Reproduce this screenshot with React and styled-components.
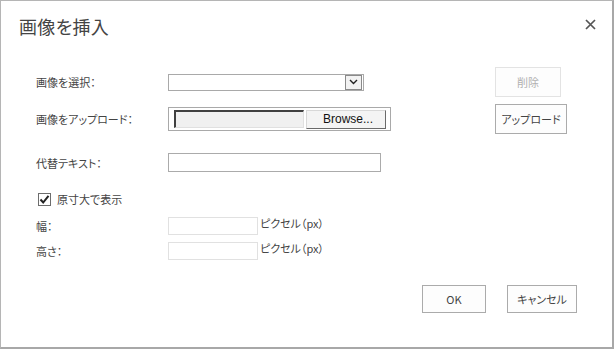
import React from "react";
import styled, { createGlobalStyle } from "styled-components";

const Global = createGlobalStyle`
  html, body { margin: 0; padding: 0; background: #fff; }
  body { font-family: "Noto Sans CJK JP", "Liberation Sans", sans-serif; }
`;

const Dialog = styled.div`
  box-sizing: border-box;
  width: 614px;
  height: 349px;
  border: 1px solid #b5b5b5;
  border-right: 2px solid #a8a8a8;
  border-bottom: 2px solid #a8a8a8;
  background: #fff;
  display: flex;
  flex-direction: column;
  color: #444;
  font-feature-settings: "palt";
`;

const Header = styled.div`
  display: flex;
  justify-content: space-between;
  align-items: flex-start;
  padding: 12px 15px 0 18px;
  height: 52px;
  box-sizing: border-box;
`;

const Title = styled.h1`
  margin: 0;
  font-size: 18px;
  line-height: 26px;
  font-weight: 400;
  color: #444;
  letter-spacing: 0.3px;
`;

const Close = styled.button`
  border: none;
  background: none;
  padding: 0;
  margin-top: 4px;
  width: 14px;
  height: 14px;
  display: flex;
  align-items: center;
  justify-content: center;
  cursor: pointer;
`;

const Form = styled.div`
  padding-left: 35px;
  display: flex;
  flex-direction: column;
`;

const Row = styled.div`
  display: grid;
  grid-template-columns: 132px 327px 1fr;
  align-items: center;
  height: ${(p) => p.$h}px;
  margin-top: ${(p) => p.$mt}px;
`;

const Label = styled.span`
  font-size: 11px;
  color: #444;
  line-height: 14px;
`;

const Select = styled.div`
  box-sizing: border-box;
  width: 196px;
  height: 17px;
  border: 1px solid #a9a9a9;
  background: #fff;
  display: flex;
  justify-content: flex-end;
  align-items: center;
  padding-right: 1px;
`;

const SelectArrow = styled.div`
  box-sizing: border-box;
  width: 17px;
  height: 15px;
  border: 1px solid #8a8a8a;
  background: #f2f2f2;
  display: flex;
  align-items: center;
  justify-content: center;
`;

const FileBox = styled.div`
  box-sizing: border-box;
  width: 223px;
  height: 24px;
  border: 1px solid #a9a9a9;
  display: flex;
  align-items: center;
  padding-left: 5px;
  gap: 2px;
`;

const FileText = styled.div`
  box-sizing: border-box;
  width: 130px;
  height: 18px;
  background: #f0f0f0;
  border-top: 2px solid #404040;
  border-left: 2px solid #404040;
  border-right: 1px solid #e0e0e0;
  border-bottom: 1px solid #e0e0e0;
`;

const Browse = styled.div`
  box-sizing: border-box;
  width: 80px;
  height: 19px;
  border: 1px solid #6a6a6a;
  border-top-color: #d8d8d8;
  border-left-color: #d8d8d8;
  background: #f4f4f4;
  font-family: "Liberation Sans", Arial, sans-serif;
  font-size: 12px;
  color: #111;
  display: flex;
  align-items: center;
  justify-content: center;
  padding-left: 4px;
`;

const TextInput = styled.div`
  box-sizing: border-box;
  width: ${(p) => p.$w}px;
  height: ${(p) => p.$hh}px;
  border: 1px solid ${(p) => (p.$light ? "#e1e1e1" : "#ababab")};
  background: #fff;
`;

const InlineField = styled.div`
  display: flex;
  align-items: center;
  gap: 2px;
`;

const Unit = styled.span`
  font-size: 11px;
  color: #444;
  margin-top: -6px;
`;

const Button = styled.button`
  box-sizing: border-box;
  height: ${(p) => p.$h || 28}px;
  width: ${(p) => p.$w}px;
  border: 1px solid ${(p) => (p.disabled ? "#e3e3e3" : "#ababab")};
  background: #fdfdfd;
  color: ${(p) => (p.disabled ? "#b0b0b0" : "#444")};
  font-family: "Noto Sans CJK JP", "Liberation Sans", sans-serif;
  font-feature-settings: "palt";
  font-size: 11px;
  padding: 0;
  display: flex;
  align-items: center;
  justify-content: center;
`;

const CheckRow = styled.div`
  display: flex;
  align-items: center;
  gap: 6px;
  padding-left: 2px;
  height: ${(p) => p.$h}px;
  margin-top: ${(p) => p.$mt}px;
`;

const CheckBox = styled.span`
  box-sizing: border-box;
  width: 13px;
  height: 13px;
  border: 1px solid #6d6d6d;
  background: #fff;
  display: flex;
  align-items: center;
  justify-content: center;
`;

const Footer = styled.div`
  display: flex;
  justify-content: flex-end;
  gap: 21px;
  padding-right: 35px;
  margin-top: 25px;
`;

export default function App() {
  return (
    <>
      <Global />
      <Dialog>
        <Header>
          <Title>画像を挿入</Title>
          <Close aria-label="close">
            <svg width="11" height="11" viewBox="0 0 11 11">
              <path d="M1 1 L10 10 M10 1 L1 10" stroke="#555" strokeWidth="1.7" />
            </svg>
          </Close>
        </Header>
        <Form>
          <Row $h={30} $mt={14}>
            <Label>画像を選択：</Label>
            <Select>
              <SelectArrow>
                <svg width="9" height="6" viewBox="0 0 9 6">
                  <path d="M1 1 L4.5 4.5 L8 1" stroke="#222" strokeWidth="1.4" fill="none" />
                </svg>
              </SelectArrow>
            </Select>
            <Button disabled $w={66} $h={30}>削除</Button>
          </Row>
          <Row $h={30} $mt={7}>
            <Label>画像をアップロード：</Label>
            <FileBox>
              <FileText />
              <Browse>Browse...</Browse>
            </FileBox>
            <Button $w={72} $h={30}>アップロード</Button>
          </Row>
          <Row $h={19} $mt={19}>
            <Label>代替テキスト：</Label>
            <TextInput $w={213} $hh={19} />
          </Row>
          <CheckRow $h={18} $mt={18}>
            <CheckBox>
              <svg width="11" height="11" viewBox="0 0 11 11">
                <path d="M1.5 5.5 L4.2 8.5 L9.5 1.8" stroke="#222" strokeWidth="2" fill="none" />
              </svg>
            </CheckBox>
            <Label>原寸大で表示</Label>
          </CheckRow>
          <Row $h={18} $mt={9}>
            <Label>幅：</Label>
            <InlineField>
              <TextInput $w={90} $hh={18} $light />
              <Unit>ピクセル（px）</Unit>
            </InlineField>
          </Row>
          <Row $h={18} $mt={7}>
            <Label>高さ：</Label>
            <InlineField>
              <TextInput $w={90} $hh={18} $light />
              <Unit>ピクセル（px）</Unit>
            </InlineField>
          </Row>
        </Form>
        <Footer>
          <Button $w={64}>OK</Button>
          <Button $w={70}>キャンセル</Button>
        </Footer>
      </Dialog>
    </>
  );
}
